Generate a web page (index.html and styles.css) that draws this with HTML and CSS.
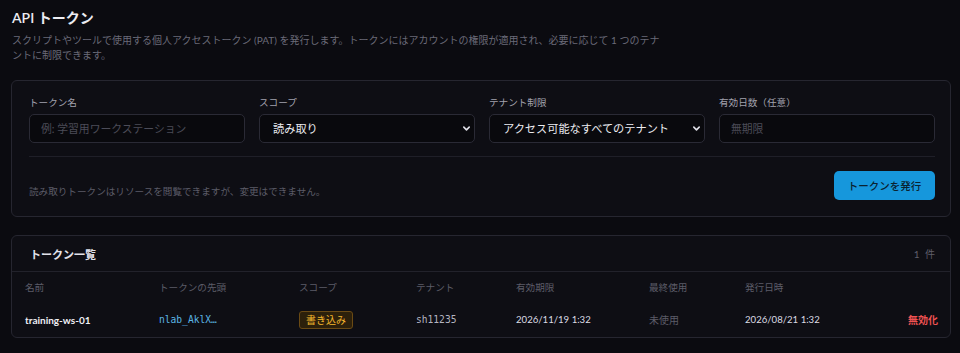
FILE: index.html
```html
<!DOCTYPE html>
<html lang="ja">
<head>
<meta charset="utf-8">
<title>API トークン</title>
<link rel="stylesheet" href="styles.css">
</head>
<body>
<main class="page">
  <h1 class="title">API トークン</h1>
  <p class="desc">スクリプトやツールで使用する個人アクセストークン (PAT) を発行します。トークンにはアカウントの権限が適用され、必要に応じて 1 つのテナントに制限できます。</p>

  <section class="card form-card">
    <div class="fields">
      <label class="field">
        <span class="label">トークン名</span>
        <input class="input" type="text" placeholder="例: 学習用ワークステーション">
      </label>
      <label class="field">
        <span class="label">スコープ</span>
        <span class="select-wrap">
          <select class="select"><option>読み取り</option></select>
          <svg class="chev" viewBox="0 0 10 10" width="9" height="9"><path d="M2 3.5 L5 6.5 L8 3.5" fill="none" stroke="currentColor" stroke-width="1.8" stroke-linecap="round" stroke-linejoin="round"/></svg>
        </span>
      </label>
      <label class="field">
        <span class="label">テナント制限</span>
        <span class="select-wrap">
          <select class="select"><option>アクセス可能なすべてのテナント</option></select>
          <svg class="chev" viewBox="0 0 10 10" width="9" height="9"><path d="M2 3.5 L5 6.5 L8 3.5" fill="none" stroke="currentColor" stroke-width="1.8" stroke-linecap="round" stroke-linejoin="round"/></svg>
        </span>
      </label>
      <label class="field">
        <span class="label">有効日数（任意）</span>
        <input class="input" type="text" placeholder="無期限">
      </label>
    </div>
    <div class="form-foot">
      <p class="hint">読み取りトークンはリソースを閲覧できますが、変更はできません。</p>
      <button class="btn" type="button">トークンを発行</button>
    </div>
  </section>

  <section class="card list-card">
    <header class="list-head">
      <h2 class="list-title">トークン一覧</h2>
      <span class="count">1 件</span>
    </header>
    <div class="grid grid-head">
      <span>名前</span>
      <span>トークンの先頭</span>
      <span>スコープ</span>
      <span>テナント</span>
      <span>有効期限</span>
      <span>最終使用</span>
      <span>発行日時</span>
      <span></span>
    </div>
    <div class="grid grid-row">
      <span class="c-name">training-ws-01</span>
      <span class="c-token">nlab_AklX…</span>
      <span><span class="badge">書き込み</span></span>
      <span class="c-tenant">sh11235</span>
      <span class="c-date">2026/11/19 1:32</span>
      <span class="c-unused">未使用</span>
      <span class="c-date">2026/08/21 1:32</span>
      <span class="c-action">無効化</span>
    </div>
  </section>
</main>
</body>
</html>
```

FILE: styles.css
```css
* { box-sizing: border-box; }

html, body {
  margin: 0;
  background: #0b0b10;
}

body {
  font-family: "Lato", "Noto Sans CJK JP", sans-serif;
  color: #e6e6ec;
}

.page {
  padding: 8px 9px 16px 11px;
}

.title {
  margin: 0;
  font-size: 14px;
  line-height: 20px;
  font-weight: 600;
  color: #ececf1;
  padding-left: 1px;
}

.desc {
  margin: 5px 0 0;
  padding-left: 1px;
  max-width: 652px;
  font-size: 10px;
  line-height: 15px;
  color: #6a6a78;
}

.card {
  border: 1px solid #262630;
  border-radius: 6px;
  background: #0e0e14;
}

.form-card {
  margin-top: 17px;
  padding: 15px 15px 16px 17px;
}

.fields {
  display: grid;
  grid-template-columns: repeat(4, 1fr);
  gap: 14px;
  padding-bottom: 13px;
  border-bottom: 1px solid #1f1f28;
}

.field {
  display: flex;
  flex-direction: column;
  gap: 4px;
}

.label {
  font-size: 9.6px;
  line-height: 14px;
  color: #a2a2ae;
}

.input,
.select {
  height: 29px;
  width: 100%;
  border: 1px solid #2a2a35;
  border-radius: 5px;
  background: #09090d;
  color: #ececf1;
  font-family: "Lato", "Noto Sans CJK JP", sans-serif;
  outline: none;
}

.input {
  padding: 0 11px;
  font-size: 10.8px;
}

.input::placeholder {
  color: #4c4c58;
}

.select-wrap {
  position: relative;
  display: block;
}

.select {
  appearance: none;
  -webkit-appearance: none;
  padding: 0 24px 0 13px;
  font-size: 11.2px;
}

.chev {
  position: absolute;
  right: 4px;
  top: 10px;
  color: #e0e0e8;
  pointer-events: none;
}

.form-foot {
  display: flex;
  justify-content: space-between;
  align-items: flex-end;
  margin-top: 14px;
}

.hint {
  margin: 0 0 1px;
  font-size: 9.6px;
  line-height: 14px;
  color: #5c5c68;
}

.btn {
  height: 29px;
  width: 101px;
  border: none;
  border-radius: 5px;
  background: #1697dc;
  color: #0a2230;
  font-family: "Lato", "Noto Sans CJK JP", sans-serif;
  font-size: 10.5px;
  font-weight: 500;
}

.list-card {
  margin-top: 18px;
}

.list-head {
  display: flex;
  justify-content: space-between;
  align-items: center;
  height: 36px;
  padding: 0 15px 0 18px;
  border-bottom: 1px solid #22222b;
}

.list-title {
  margin: 0;
  font-size: 11px;
  font-weight: 700;
  color: #e2e2ea;
}

.count {
  font-size: 10px;
  color: #5e5e6a;
  word-spacing: 3px;
}

.grid {
  display: grid;
  grid-template-columns: 134px 140px 117px 100px 133px 96px 1fr auto;
  align-items: center;
  padding: 0 12px 0 13px;
}

.grid-head {
  height: 30px;
  font-size: 9.6px;
  color: #5c5c68;
}

.grid-row {
  height: 35px;
  font-size: 10px;
}

.c-name {
  font-weight: 700;
  color: #f0f0f5;
}

.c-token {
  font-family: "DejaVu Sans Mono", monospace;
  font-size: 9.6px;
  color: #5cb6e4;
}

.badge {
  display: inline-block;
  padding: 1px 6px;
  border: 1px solid #6a4a14;
  border-radius: 3px;
  background: #2c200b;
  color: #f5b82e;
  font-size: 10px;
  line-height: 14px;
}

.c-tenant {
  font-family: "DejaVu Sans Mono", monospace;
  font-size: 9.6px;
  color: #b4b4c0;
}

.c-date {
  color: #dcdce4;
  font-size: 9.6px;
}

.c-unused {
  color: #5c5c68;
}

.c-action {
  text-align: right;
  color: #f05252;
  font-weight: 700;
}
```
